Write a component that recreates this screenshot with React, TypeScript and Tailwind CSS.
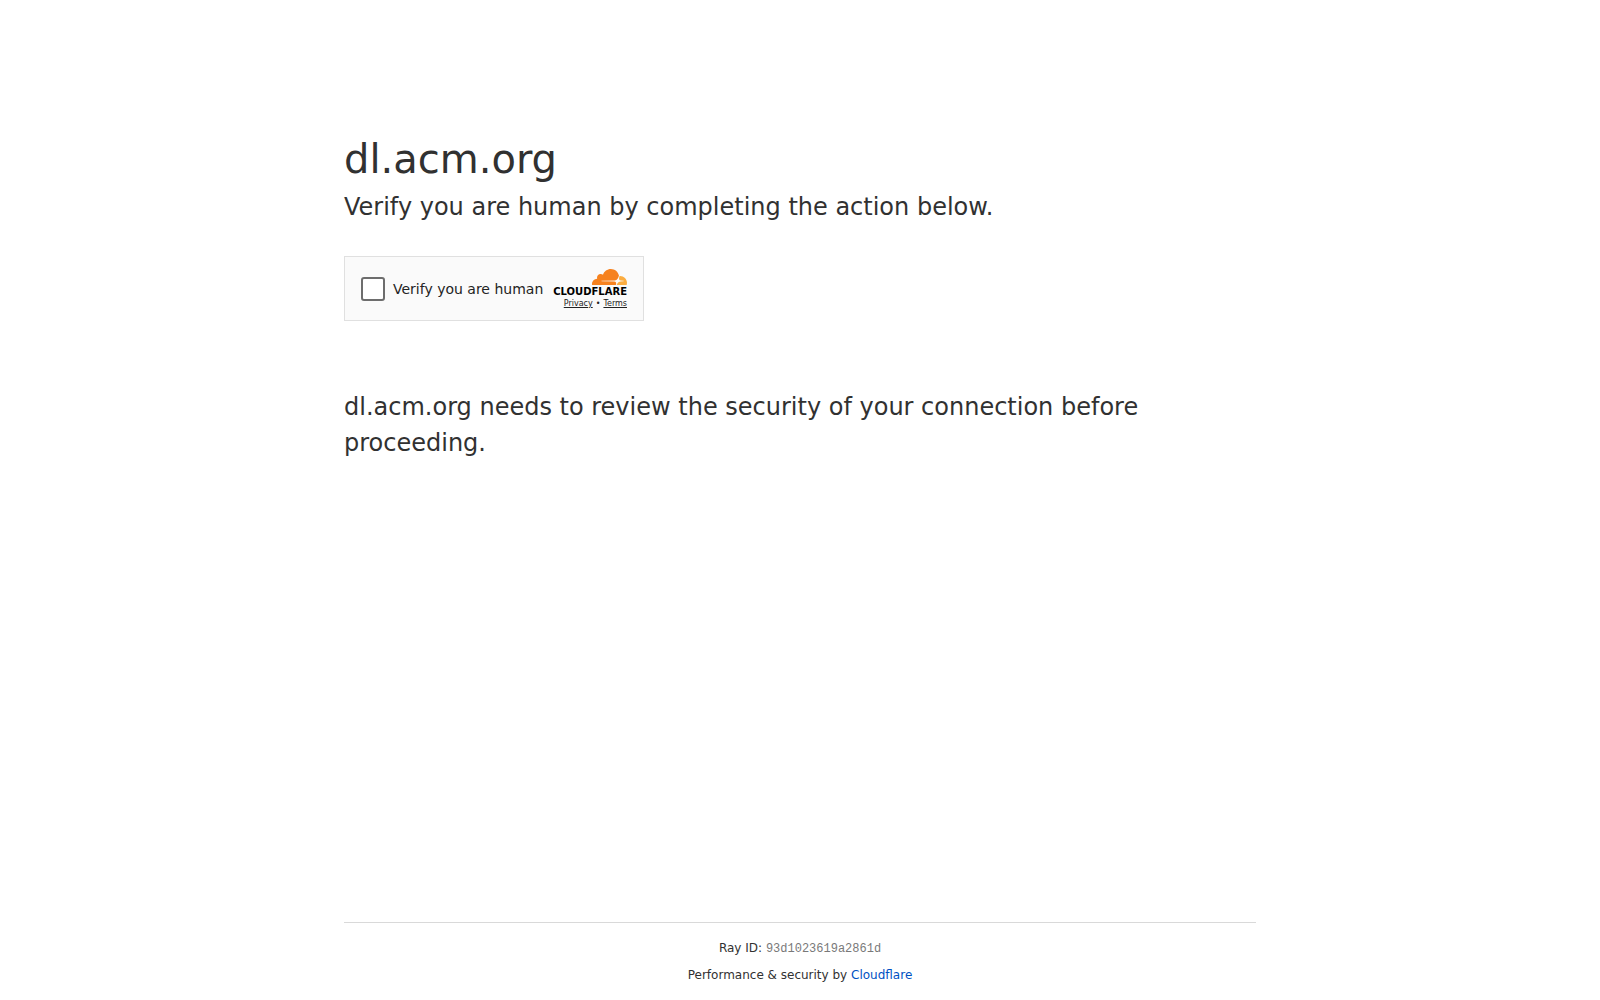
import React, { useState } from 'react';

// ---------------------------------------------------------------------------
// Page constants
// ---------------------------------------------------------------------------

const HOSTNAME = 'dl.acm.org';
const RAY_ID = '93d1023619a2861d';

// ---------------------------------------------------------------------------
// Cloudflare logo
// ---------------------------------------------------------------------------

function CloudflareLogo(): React.JSX.Element {
  return (
    <a href="#cloudflare" className="flex flex-col items-end text-black">
      <svg viewBox="0 6.57 24 10.86" className="h-4 w-[35px]" aria-hidden="true">
        <path
          fill="#f6821f"
          d="M16.5088 16.8447c.1475-.5068.0908-.9707-.1553-1.3154-.2246-.3164-.6045-.499-1.0615-.5205l-8.6592-.1123a.1559.1559 0 0 1-.1333-.0713c-.0283-.042-.0351-.0986-.021-.1553.0278-.084.1123-.1484.2036-.1562l8.7359-.1123c1.0351-.0489 2.1601-.8868 2.5537-1.9136l.499-1.3013c.0215-.0561.0293-.1128.0147-.168-.5625-2.5463-2.835-4.4453-5.5499-4.4453-2.5039 0-4.6284 1.6177-5.3876 3.8614-.4927-.3658-1.1187-.5625-1.794-.499-1.2026.119-2.1665 1.083-2.2861 2.2856-.0283.31-.0069.6128.0635.894C1.5683 13.171 0 14.7754 0 16.752c0 .1748.0142.3515.0352.5273.0141.083.0844.1475.1689.1475h15.9814c.0909 0 .1758-.0645.2032-.1553l.12-.4268z"
        />
        <path
          fill="#fbad41"
          d="M19.2656 11.2813c-.0771 0-.1611 0-.2383.0112-.0566 0-.1054.0415-.127.0976l-.3378 1.1744c-.1475.5068-.0918.9707.1543 1.3164.2256.3164.6055.498 1.0625.5195l1.8437.1133c.0557 0 .1055.0263.1329.0703.0283.043.0351.1074.0214.1562-.0283.084-.1132.1485-.204.1553l-1.921.1123c-1.041.0488-2.1582.8867-2.5527 1.914l-.1406.3585c-.0283.0713.0215.1416.0986.1416h6.5977c.0771 0 .1474-.0489.169-.126.1122-.4082.1757-.837.1757-1.2803 0-2.6025-2.125-4.727-4.7344-4.727"
        />
      </svg>
      <span className="text-[10px] leading-[14px] font-bold">CLOUDFLARE</span>
    </a>
  );
}

// ---------------------------------------------------------------------------
// Challenge widget
// ---------------------------------------------------------------------------

function ChallengeWidget(): React.JSX.Element {
  const [checked, setChecked] = useState(false);

  return (
    <div className="flex h-[65px] w-[300px] items-center justify-between border border-[#e0e0e0] bg-[#fafafa] px-4 text-[#232323]">
      <label className="flex items-center gap-2 text-sm whitespace-nowrap">
        <input
          type="checkbox"
          checked={checked}
          onChange={(e) => setChecked(e.target.checked)}
          className="size-6 appearance-none rounded-[3px] border-2 border-[#6d6d6d] bg-white checked:bg-[#c44d0e]"
        />
        Verify you are human
      </label>
      <div className="flex flex-col items-end">
        <CloudflareLogo />
        <div className="flex gap-[3px] text-[8px] leading-[10px]">
          <a href="#privacy" className="underline">Privacy</a>
          <span>•</span>
          <a href="#terms" className="underline">Terms</a>
        </div>
      </div>
    </div>
  );
}

// ---------------------------------------------------------------------------
// Page
// ---------------------------------------------------------------------------

export default function App(): React.JSX.Element {
  return (
    <div className="flex min-h-screen flex-col bg-white font-[Verdana,'DejaVu_Sans',sans-serif] text-[#313131]">
      <main className="mx-auto w-full max-w-[960px] flex-1 px-6 pt-[130px]">
        <h1 className="text-[40px] leading-[59px] font-medium">{HOSTNAME}</h1>
        <p className="mb-[31px] text-2xl leading-9 font-medium">
          Verify you are human by completing the action below.
        </p>
        <ChallengeWidget />
        <p className="mt-[68px] text-2xl leading-9 font-medium">
          {`${HOSTNAME} needs to review the security of your connection before proceeding.`}
        </p>
      </main>

      <footer className="mx-auto w-full max-w-[960px] px-6 text-center text-xs leading-[18px]">
        <div className="flex flex-col gap-2 border-t border-[#d9d9d9] py-4">
          <div>
            Ray ID:{' '}
            <code className="font-[Courier,'Liberation_Mono',monospace] text-[#797979]">{RAY_ID}</code>
          </div>
          <div>
            Performance &amp; security by{' '}
            <a href="#cloudflare" className="text-[#0051c3] hover:underline">Cloudflare</a>
          </div>
        </div>
      </footer>
    </div>
  );
}
